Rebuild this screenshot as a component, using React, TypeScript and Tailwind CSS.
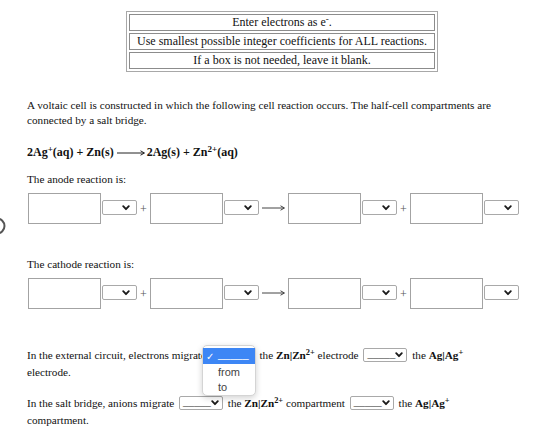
import React from "react";

const Chevron = () => (
  <svg width="8" height="6" viewBox="0 0 8 6" className="shrink-0">
    <path d="M1.2 1.2 L4 4.2 L6.8 1.2" fill="none" stroke="#1a1a1a" strokeWidth="1.8" strokeLinecap="round" strokeLinejoin="round" />
  </svg>
);

const Sel = () => (
  <div className="w-[35px] h-[15px] border border-[#a9a9a9] rounded-[2px] bg-white flex items-center justify-end pr-[6px] shrink-0">
    <Chevron />
  </div>
);

const Sel2 = () => (
  <span className="inline-flex w-[44px] h-[14px] border border-[#a9a9a9] rounded-[2px] bg-white items-center justify-between pl-[3px] pr-[5px] align-middle mx-[2px] -mt-[2px]">
    <span className="font-['Liberation_Sans',Arial,sans-serif] text-[10px] leading-[10px] text-[#666] -mt-[3px]">_____</span>
    <Chevron />
  </span>
);

const Box = () => <div className="w-[73px] h-[31px] border border-[#a3a3a3] bg-white shrink-0" />;

const Arrow = ({ w = 23, color = "#444" }: { w?: number; color?: string }) => (
  <svg width={w} height="8" viewBox={`0 0 ${w} 8`} className="shrink-0">
    <line x1="0" y1="4" x2={w - 1} y2="4" stroke={color} strokeWidth="1" />
    <path d={`M${w - 4.5} 1.8 L${w - 0.5} 4 L${w - 4.5} 6.2`} fill="none" stroke={color} strokeWidth="1" />
  </svg>
);

const Plus = () => <span className="w-[13px] text-center text-[12px] text-[#555] shrink-0">+</span>;

const ReactionRow = () => (
  <div className="flex items-center ml-[1px]">
    <Box />
    <div className="ml-[1px] mb-[2px]"><Sel /></div>
    <Plus />
    <Box />
    <div className="ml-[1px] mb-[2px]"><Sel /></div>
    <div className="mx-[3px] mb-[1px]"><Arrow /></div>
    <Box />
    <div className="ml-[1px] mb-[2px]"><Sel /></div>
    <Plus />
    <Box />
    <div className="ml-[1px] mb-[2px]"><Sel /></div>
  </div>
);

export default function App() {
  return (
    <div className="relative w-[560px] h-[436px] bg-white overflow-hidden text-[#111] font-['Liberation_Serif','Times_New_Roman',serif] text-[11.2px]">
      <div className="pt-[11px]">
        <div className="ml-[126px] w-[312px] border border-[#a8a8a8] p-[2px] flex flex-col gap-[2px] text-center text-[12px] leading-[15px]">
          <div className="border border-[#8c8c8c]">
            Enter electrons as e<sup>-</sup>.
          </div>
          <div className="border border-[#8c8c8c]">Use smallest possible integer coefficients for ALL reactions.</div>
          <div className="border border-[#8c8c8c]">If a box is not needed, leave it blank.</div>
        </div>
      </div>

      <div className="pl-[27px] w-[510px]">
        <p className="mt-[26px] leading-[15px]">
          A voltaic cell is constructed in which the following cell reaction occurs. The half-cell compartments are
          connected by a salt bridge.
        </p>

        <p className="mt-[17px] leading-[14px] text-[12px] font-bold flex items-center whitespace-nowrap">
          <span>
            2Ag<sup>+</sup>(aq) + Zn(s)
          </span>
          <span className="ml-[3px] mr-[2px] mt-[1px]"><Arrow w={28} color="#222" /></span>
          <span>
            2Ag(s) + Zn<sup>2+</sup>(aq)
          </span>
        </p>

        <p className="mt-[13px] leading-[14px]">The anode reaction is:</p>
        <div className="mt-[7px]">
          <ReactionRow />
        </div>

        <p className="mt-[33px] leading-[14px]">The cathode reaction is:</p>
        <div className="mt-[7px]">
          <ReactionRow />
        </div>

        <div className="mt-[38px] leading-[17px] whitespace-nowrap">
          <div className="h-[17px]">
            In the external circuit, electrons migrate <Sel2 /> the <b>Zn|Zn<sup>2+</sup></b> electrode <Sel2 /> the{" "}
            <b>Ag|Ag<sup>+</sup></b>
          </div>
          <div className="h-[17px]">electrode.</div>
        </div>

        <div className="mt-[14px] leading-[17px] whitespace-nowrap">
          <div className="h-[17px]">
            In the salt bridge, anions migrate <Sel2 /> the <b>Zn|Zn<sup>2+</sup></b> compartment <Sel2 /> the{" "}
            <b>Ag|Ag<sup>+</sup></b>
          </div>
          <div className="h-[17px]">compartment.</div>
        </div>
      </div>

      {/* open native select popup */}
      <div className="absolute left-[202px] top-[345px] w-[54px] h-[51px] bg-white rounded-[5px] border border-[#d4d4d4] shadow-[0_2px_6px_rgba(0,0,0,0.18)] py-[2px] font-['Liberation_Sans',Arial,sans-serif] text-[11px] leading-[15px] text-[#444]">
        <div className="bg-[#3d86f5] text-white h-[16px] flex items-center pl-[3px]">
          <span className="w-[12px] text-[10px]">✓</span>
          <span className="-mt-[3px]">_____</span>
        </div>
        <div className="pl-[15px] h-[15px] mt-[1px]">from</div>
        <div className="pl-[15px] h-[15px]">to</div>
      </div>

      {/* partially visible circle at left edge */}
      <svg className="absolute left-[-12px] top-[217px]" width="18" height="18" viewBox="0 0 18 18">
        <circle cx="9" cy="9" r="7.5" fill="none" stroke="#555" strokeWidth="2" />
      </svg>
    </div>
  );
}
